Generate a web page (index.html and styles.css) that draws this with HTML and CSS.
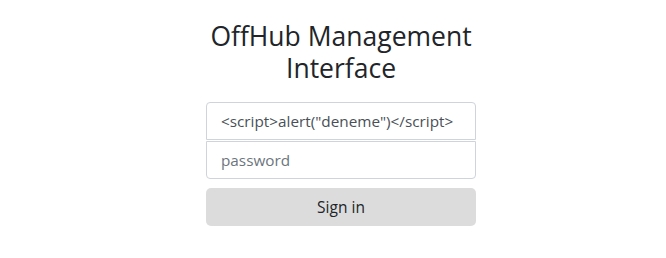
FILE: index.html
```html
<!DOCTYPE html>
<html>
<head>
<meta charset="utf-8">
<link rel="stylesheet" href="styles.css">
</head>
<body>
<div class="page">
  <form class="signin">
    <h1 class="title">OffHub Management Interface</h1>
    <input class="field field-top" type="text" value="<script>alert(&quot;deneme&quot;)</script>">
    <input class="field field-bottom" type="password" placeholder="password">
    <button class="btn" type="button">Sign in</button>
  </form>
</div>
</body>
</html>
```
FILE: styles.css
```css
html, body {
  margin: 0;
  padding: 0;
  background: #fff;
}
body {
  font-family: "Open Sans", "Noto Sans", sans-serif;
  color: #212529;
}
.page {
  display: flex;
  justify-content: center;
  padding: 20px 0 0 16px;
}
.signin {
  width: 270px;
  display: flex;
  flex-direction: column;
}
.title {
  margin: 0 0 18px 0;
  font-size: 26.5px;
  line-height: 32px;
  font-weight: 400;
  text-align: center;
  color: #212529;
}
.field {
  box-sizing: border-box;
  height: 38px;
  width: 100%;
  margin: 0;
  padding: 6px 14px;
  font-family: inherit;
  font-size: 15.3px;
  color: #495057;
  background: #fff;
  border: 1px solid #ced4da;
  outline: none;
}
.field::placeholder {
  color: #6c757d;
}
.field-top {
  border-radius: 4px 4px 0 0;
  margin-bottom: 1px;
}
.field-bottom {
  border-radius: 0 0 4px 4px;
}
.btn {
  margin-top: 9px;
  height: 38px;
  width: 100%;
  border: none;
  border-radius: 5px;
  background: #dcdcdc;
  color: #212529;
  font-family: inherit;
  font-size: 15.5px;
}
```
